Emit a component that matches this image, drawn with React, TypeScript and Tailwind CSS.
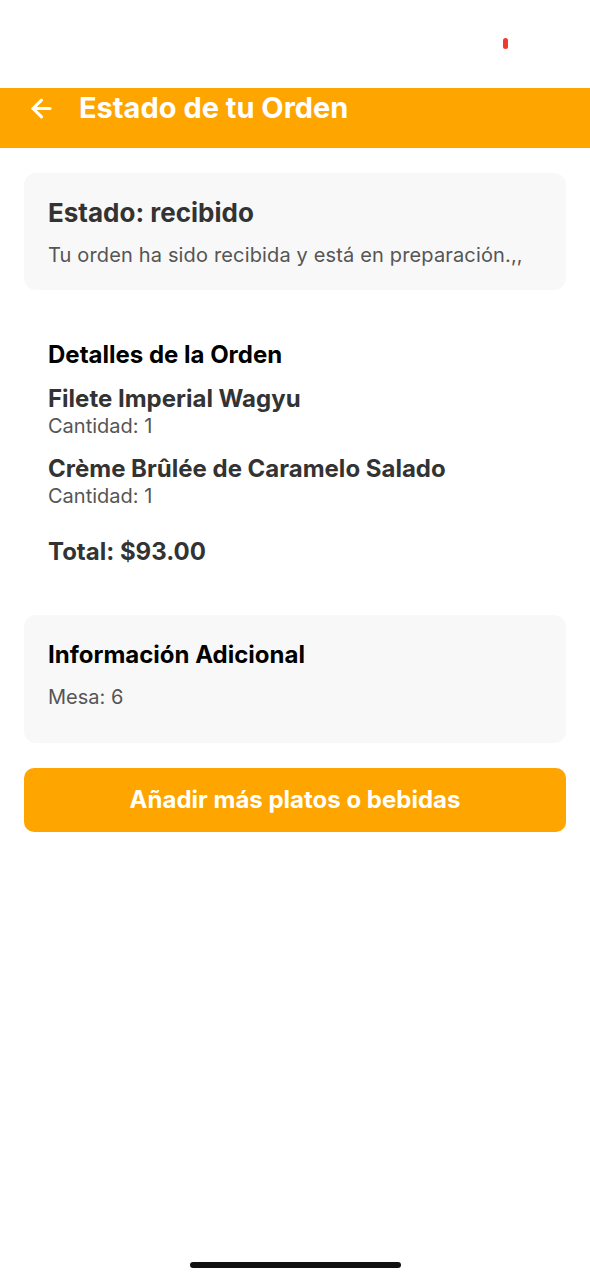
import React from "react";
import { ArrowLeft } from "lucide-react";

export default function App() {
  return (
    <div className="min-h-[1280px] w-[590px] bg-white relative font-['Inter',sans-serif]">
      <div className="h-[88px] flex justify-end pr-[82px] pt-[38px]">
        <div className="w-[5px] h-[11px] rounded-full bg-[#f03a2e]" />
      </div>
      <div className="h-[60px] bg-[#FFA500] flex items-start pl-[27px] pt-[4px] gap-[23px]">
        <ArrowLeft className="text-white mt-[2px]" size={29} strokeWidth={2.6} />
        <h1 className="text-white text-[29px] leading-[32px] font-bold">Estado de tu Orden</h1>
      </div>
      <div className="px-6 pt-[25px]">
        <div className="bg-[#f8f8f8] rounded-xl px-6 pt-[25px] pb-[23px] mb-6">
          <h2 className="text-[26px] leading-[30px] font-bold text-[#333]">Estado: recibido</h2>
          <p className="text-[20px] leading-[24px] tracking-[0.15px] text-[#555] mt-[15px]">
            Tu orden ha sido recibida y está en preparación.,,
          </p>
        </div>
        <div className="bg-white rounded-xl px-6 pt-[27px] pb-[25px] mb-6">
          <h3 className="text-[24px] leading-[28px] font-bold text-black">Detalles de la Orden</h3>
          <p className="text-[24px] leading-[28px] font-bold text-[#333] mt-[16px]">Filete Imperial Wagyu</p>
          <p className="text-[20px] leading-[22px] text-[#555] mt-[2px]">Cantidad: 1</p>
          <p className="text-[24px] leading-[28px] font-bold text-[#333] mt-[18px]">Crème Brûlée de Caramelo Salado</p>
          <p className="text-[20px] leading-[22px] text-[#555] mt-[2px]">Cantidad: 1</p>
          <p className="text-[24px] leading-[28px] font-bold text-[#333] mt-[31px]">Total: $93.00</p>
        </div>
        <div className="bg-[#f8f8f8] rounded-xl px-6 pt-[26px] h-[128px]">
          <h3 className="text-[24px] leading-[28px] font-bold text-black">Información Adicional</h3>
          <p className="text-[20px] leading-[24px] text-[#555] mt-[16px]">Mesa: 6</p>
        </div>
        <button className="w-full h-[64px] mt-[25px] bg-[#FFA500] rounded-[10px] flex items-center justify-center">
          <span className="text-white text-[24px] font-bold">Añadir más platos o bebidas</span>
        </button>
      </div>
      <div className="absolute left-[190px] top-[1262px] w-[211px] h-[6px] rounded-full bg-[#111]" />
    </div>
  );
}
